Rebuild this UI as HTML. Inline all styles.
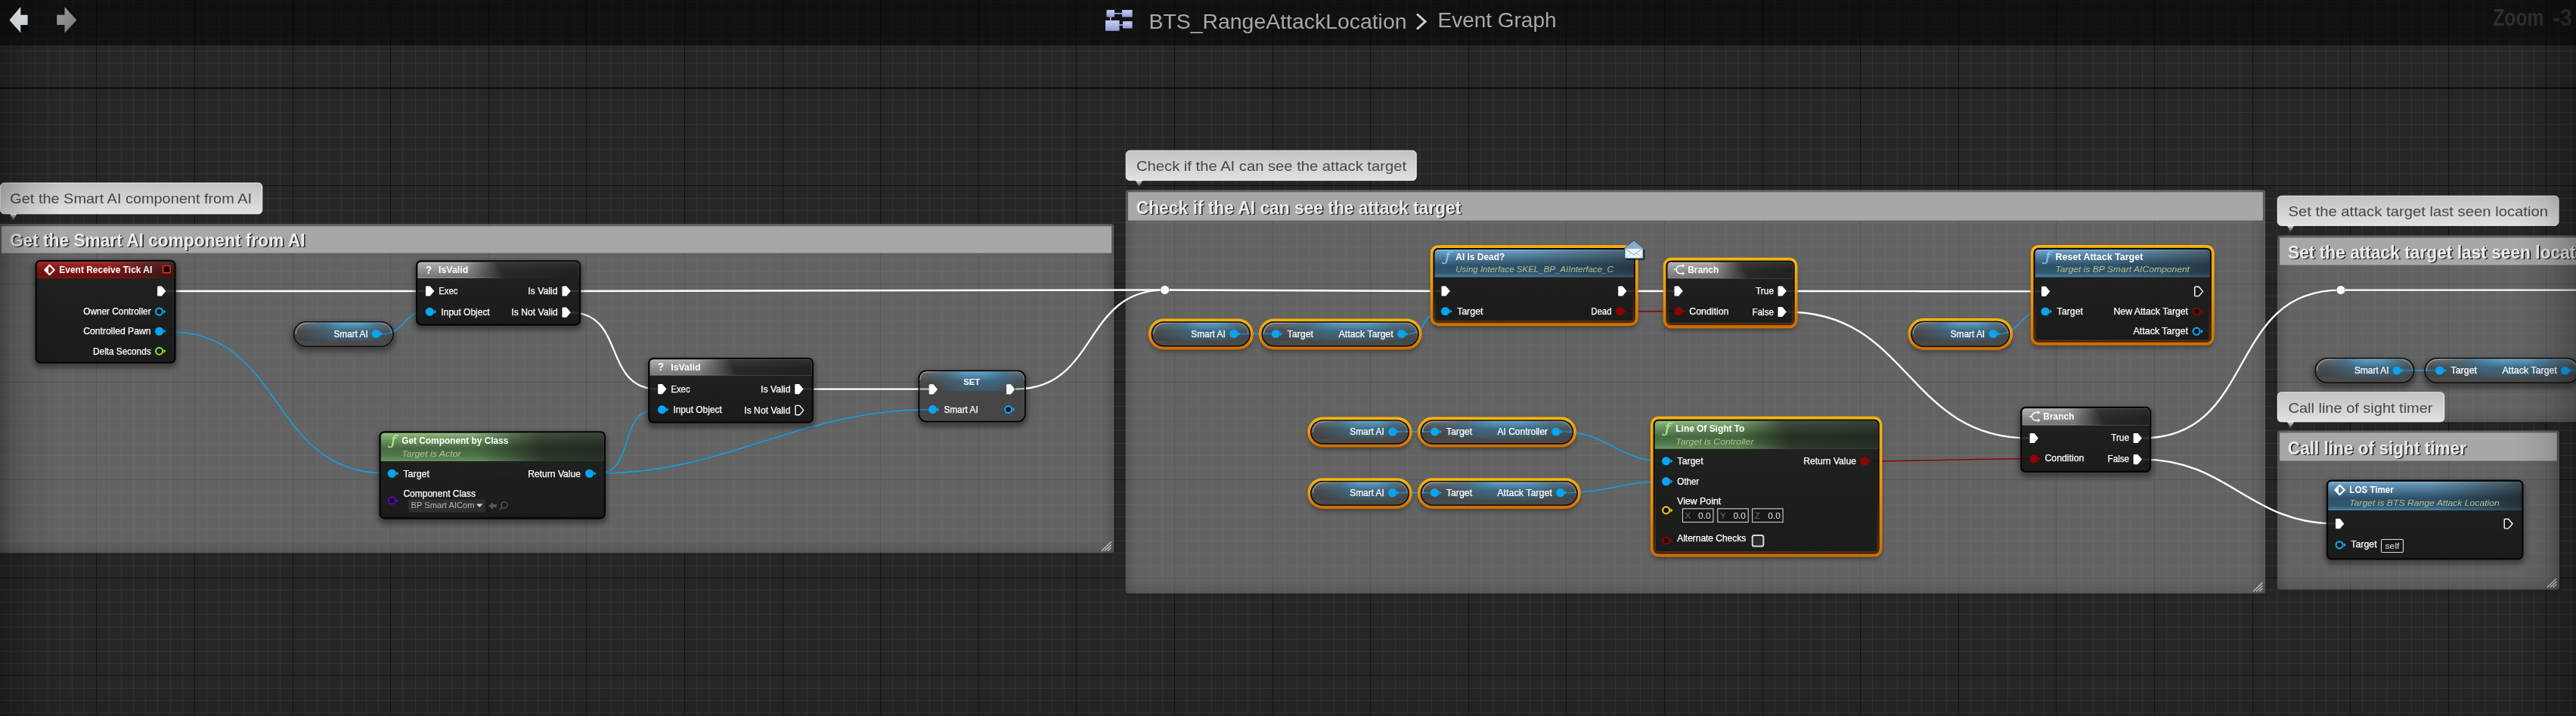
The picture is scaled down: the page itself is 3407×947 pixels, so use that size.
<!DOCTYPE html>
<html><head><meta charset="utf-8"><title>BTS_RangeAttackLocation - Event Graph</title>
<style>
html,body{margin:0;padding:0;background:#262626;overflow:hidden}
svg{display:block;font-family:"Liberation Sans",sans-serif;will-change:transform}
text{white-space:pre}
</style></head><body>
<svg width="3407" height="947" viewBox="0 0 3407 947">
<defs>
<filter id="blur2" x="-5%" y="-5%" width="110%" height="115%"><feGaussianBlur stdDeviation="2.5"/></filter>
<linearGradient id="gbubarrow" x1="0" y1="0" x2="0" y2="1"><stop offset="0" stop-color="#f4f4f4"/><stop offset="1" stop-color="#bbbbbb" stop-opacity="0.25"/></linearGradient>
<filter id="blur4" x="-20%" y="-20%" width="140%" height="160%"><feGaussianBlur stdDeviation="3"/></filter>
<linearGradient id="gbody" x1="0" y1="0" x2="0" y2="1"><stop offset="0" stop-color="#191b19" stop-opacity="0.80"/><stop offset="1" stop-color="#101210" stop-opacity="0.80"/></linearGradient>
<linearGradient id="gsel" x1="0" y1="0" x2="0" y2="1" gradientUnits="objectBoundingBox"><stop offset="0" stop-color="#f8b30a"/><stop offset="0.45" stop-color="#ee9a06"/><stop offset="1" stop-color="#d06e00"/></linearGradient>
<linearGradient id="gselglow" x1="0" y1="0" x2="0" y2="1"><stop offset="0" stop-color="#c07808" stop-opacity="0.0"/><stop offset="0.6" stop-color="#b06a06" stop-opacity="0.10"/><stop offset="1" stop-color="#a05a04" stop-opacity="0.42"/></linearGradient>
<linearGradient id="hred" x1="0" y1="0" x2="0" y2="1"><stop offset="0" stop-color="#b22a2a"/><stop offset="0.12" stop-color="#981b1b"/><stop offset="0.9" stop-color="#6e0f0f"/><stop offset="1" stop-color="#8a1a1a"/></linearGradient>
<linearGradient id="hgreen" x1="0" y1="0" x2="0" y2="1"><stop offset="0" stop-color="#8ec07e"/><stop offset="0.12" stop-color="#76a568"/><stop offset="0.55" stop-color="#486a41"/><stop offset="0.78" stop-color="#50774a"/><stop offset="1" stop-color="#68965f"/></linearGradient>
<linearGradient id="hblue" x1="0" y1="0" x2="0" y2="1"><stop offset="0" stop-color="#7cb0d4"/><stop offset="0.12" stop-color="#5b90b5"/><stop offset="0.58" stop-color="#2f526c"/><stop offset="0.85" stop-color="#315872"/><stop offset="1" stop-color="#4d84a8"/></linearGradient>
<linearGradient id="hgrey" x1="0" y1="0" x2="0" y2="1"><stop offset="0" stop-color="#c4c4c4"/><stop offset="0.12" stop-color="#a8a8a8"/><stop offset="0.92" stop-color="#787878"/><stop offset="1" stop-color="#9a9a9a"/></linearGradient>
<linearGradient id="ggloss" x1="0" y1="0" x2="0" y2="1"><stop offset="0" stop-color="#fff" stop-opacity="0.06"/><stop offset="0.5" stop-color="#fff" stop-opacity="0"/></linearGradient>
<linearGradient id="gvar" x1="0" y1="0" x2="0" y2="1"><stop offset="0" stop-color="#70777b"/><stop offset="0.35" stop-color="#4c5154"/><stop offset="0.78" stop-color="#414446"/><stop offset="0.8" stop-color="#4c4c4c"/><stop offset="1" stop-color="#4a4a4a"/></linearGradient>
<linearGradient id="gvarblue" x1="0" y1="0" x2="1" y2="0"><stop offset="0.1" stop-color="#3a7aa0" stop-opacity="0"/><stop offset="0.42" stop-color="#3a7aa0" stop-opacity="0.95"/><stop offset="0.72" stop-color="#3a7aa0" stop-opacity="0.95"/><stop offset="0.99" stop-color="#3a7aa0" stop-opacity="0.08"/></linearGradient>
<linearGradient id="gvarmaskg" x1="0" y1="0" x2="0" y2="1"><stop offset="0" stop-color="#fff"/><stop offset="0.45" stop-color="#999"/><stop offset="0.77" stop-color="#555"/><stop offset="0.8" stop-color="#000"/></linearGradient>
<linearGradient id="gvartopmg" x1="0" y1="0" x2="1" y2="0"><stop offset="0" stop-color="#000"/><stop offset="0.35" stop-color="#fff"/><stop offset="0.65" stop-color="#fff"/><stop offset="1" stop-color="#000"/></linearGradient>
<mask id="gvartopmask" maskContentUnits="objectBoundingBox"><rect width="1" height="1" fill="url(#gvartopmg)"/></mask>
<linearGradient id="gsetmg" x1="0" y1="0" x2="0" y2="1"><stop offset="0" stop-color="#fff"/><stop offset="0.2" stop-color="#aaa"/><stop offset="0.39" stop-color="#666"/><stop offset="0.41" stop-color="#000"/></linearGradient>
<linearGradient id="gsetbase" x1="0" y1="0" x2="0" y2="1"><stop offset="0" stop-color="#9aa4aa" stop-opacity="0.45"/><stop offset="0.2" stop-color="#707a80" stop-opacity="0.12"/><stop offset="0.4" stop-color="#000" stop-opacity="0.05"/><stop offset="0.41" stop-color="#000" stop-opacity="0"/></linearGradient>
<mask id="gsetmask" maskContentUnits="objectBoundingBox"><rect width="1" height="1" fill="url(#gsetmg)"/></mask>
<mask id="gvarmask" maskContentUnits="objectBoundingBox"><rect width="1" height="1" fill="url(#gvarmaskg)"/></mask>
<linearGradient id="gvartop" x1="0" y1="0" x2="0" y2="1"><stop offset="0" stop-color="#8fd0f5" stop-opacity="0.45"/><stop offset="0.36" stop-color="#8fd0f5" stop-opacity="0"/></linearGradient>
<linearGradient id="gvarhl" x1="0" y1="0" x2="1" y2="0"><stop offset="0" stop-color="#fff" stop-opacity="0.55"/><stop offset="0.25" stop-color="#fff" stop-opacity="0.15"/><stop offset="0.85" stop-color="#fff" stop-opacity="0.15"/><stop offset="1" stop-color="#fff" stop-opacity="0.3"/></linearGradient>
<linearGradient id="gbub" x1="0" y1="0" x2="0" y2="1"><stop offset="0" stop-color="#c2c2c2"/><stop offset="1" stop-color="#e1e1e1"/></linearGradient>
<linearGradient id="gbar" x1="0" y1="0" x2="0" y2="1"><stop offset="0" stop-color="#000" stop-opacity="0.60"/><stop offset="1" stop-color="#000" stop-opacity="0.56"/></linearGradient>
<linearGradient id="cedgeL" x1="0" y1="0" x2="1" y2="0"><stop offset="0" stop-color="#000" stop-opacity="0.13"/><stop offset="0.6" stop-color="#000" stop-opacity="0.05"/><stop offset="1" stop-color="#000" stop-opacity="0"/></linearGradient>
<linearGradient id="cedgeR" x1="1" y1="0" x2="0" y2="0"><stop offset="0" stop-color="#000" stop-opacity="0.13"/><stop offset="0.6" stop-color="#000" stop-opacity="0.05"/><stop offset="1" stop-color="#000" stop-opacity="0"/></linearGradient>
<linearGradient id="cedgeB" x1="0" y1="1" x2="0" y2="0"><stop offset="0" stop-color="#000" stop-opacity="0.13"/><stop offset="0.6" stop-color="#000" stop-opacity="0.05"/><stop offset="1" stop-color="#000" stop-opacity="0"/></linearGradient>
<linearGradient id="vigL" x1="0" y1="0" x2="1" y2="0"><stop offset="0" stop-color="#000" stop-opacity="0.24"/><stop offset="0.5" stop-color="#000" stop-opacity="0.08"/><stop offset="1" stop-color="#000" stop-opacity="0"/></linearGradient>
<linearGradient id="vigR" x1="1" y1="0" x2="0" y2="0"><stop offset="0" stop-color="#000" stop-opacity="0.24"/><stop offset="0.5" stop-color="#000" stop-opacity="0.08"/><stop offset="1" stop-color="#000" stop-opacity="0"/></linearGradient>
<linearGradient id="vigB" x1="0" y1="1" x2="0" y2="0"><stop offset="0" stop-color="#000" stop-opacity="0.12"/><stop offset="1" stop-color="#000" stop-opacity="0"/></linearGradient>
</defs>
<rect width="3407" height="947" fill="#262626"/>

<path d="M14.5,0V947M30.5,0V947M46.5,0V947M63.5,0V947M79.5,0V947M95.5,0V947M111.5,0V947M144.5,0V947M160.5,0V947M176.5,0V947M192.5,0V947M208.5,0V947M225.5,0V947M241.5,0V947M273.5,0V947M289.5,0V947M306.5,0V947M322.5,0V947M338.5,0V947M354.5,0V947M370.5,0V947M403.5,0V947M419.5,0V947M435.5,0V947M451.5,0V947M468.5,0V947M484.5,0V947M500.5,0V947M532.5,0V947M549.5,0V947M565.5,0V947M581.5,0V947M597.5,0V947M613.5,0V947M630.5,0V947M662.5,0V947M678.5,0V947M694.5,0V947M711.5,0V947M727.5,0V947M743.5,0V947M759.5,0V947M792.5,0V947M808.5,0V947M824.5,0V947M840.5,0V947M856.5,0V947M873.5,0V947M889.5,0V947M921.5,0V947M937.5,0V947M954.5,0V947M970.5,0V947M986.5,0V947M1002.5,0V947M1018.5,0V947M1051.5,0V947M1067.5,0V947M1083.5,0V947M1099.5,0V947M1116.5,0V947M1132.5,0V947M1148.5,0V947M1180.5,0V947M1197.5,0V947M1213.5,0V947M1229.5,0V947M1245.5,0V947M1261.5,0V947M1278.5,0V947M1310.5,0V947M1326.5,0V947M1342.5,0V947M1359.5,0V947M1375.5,0V947M1391.5,0V947M1407.5,0V947M1440.5,0V947M1456.5,0V947M1472.5,0V947M1488.5,0V947M1504.5,0V947M1521.5,0V947M1537.5,0V947M1569.5,0V947M1585.5,0V947M1602.5,0V947M1618.5,0V947M1634.5,0V947M1650.5,0V947M1666.5,0V947M1699.5,0V947M1715.5,0V947M1731.5,0V947M1747.5,0V947M1764.5,0V947M1780.5,0V947M1796.5,0V947M1828.5,0V947M1845.5,0V947M1861.5,0V947M1877.5,0V947M1893.5,0V947M1909.5,0V947M1926.5,0V947M1958.5,0V947M1974.5,0V947M1990.5,0V947M2007.5,0V947M2023.5,0V947M2039.5,0V947M2055.5,0V947M2088.5,0V947M2104.5,0V947M2120.5,0V947M2136.5,0V947M2152.5,0V947M2169.5,0V947M2185.5,0V947M2217.5,0V947M2233.5,0V947M2250.5,0V947M2266.5,0V947M2282.5,0V947M2298.5,0V947M2314.5,0V947M2347.5,0V947M2363.5,0V947M2379.5,0V947M2395.5,0V947M2412.5,0V947M2428.5,0V947M2444.5,0V947M2476.5,0V947M2493.5,0V947M2509.5,0V947M2525.5,0V947M2541.5,0V947M2557.5,0V947M2574.5,0V947M2606.5,0V947M2622.5,0V947M2638.5,0V947M2655.5,0V947M2671.5,0V947M2687.5,0V947M2703.5,0V947M2736.5,0V947M2752.5,0V947M2768.5,0V947M2784.5,0V947M2800.5,0V947M2817.5,0V947M2833.5,0V947M2865.5,0V947M2881.5,0V947M2898.5,0V947M2914.5,0V947M2930.5,0V947M2946.5,0V947M2962.5,0V947M2995.5,0V947M3011.5,0V947M3027.5,0V947M3043.5,0V947M3060.5,0V947M3076.5,0V947M3092.5,0V947M3124.5,0V947M3141.5,0V947M3157.5,0V947M3173.5,0V947M3189.5,0V947M3205.5,0V947M3222.5,0V947M3254.5,0V947M3270.5,0V947M3286.5,0V947M3303.5,0V947M3319.5,0V947M3335.5,0V947M3351.5,0V947M3384.5,0V947M3400.5,0V947M0,2.5H3407M0,19.5H3407M0,35.5H3407M0,51.5H3407M0,67.5H3407M0,83.5H3407M0,100.5H3407M0,132.5H3407M0,148.5H3407M0,164.5H3407M0,181.5H3407M0,197.5H3407M0,213.5H3407M0,229.5H3407M0,262.5H3407M0,278.5H3407M0,294.5H3407M0,310.5H3407M0,326.5H3407M0,343.5H3407M0,359.5H3407M0,391.5H3407M0,407.5H3407M0,424.5H3407M0,440.5H3407M0,456.5H3407M0,472.5H3407M0,488.5H3407M0,521.5H3407M0,537.5H3407M0,553.5H3407M0,569.5H3407M0,586.5H3407M0,602.5H3407M0,618.5H3407M0,650.5H3407M0,667.5H3407M0,683.5H3407M0,699.5H3407M0,715.5H3407M0,731.5H3407M0,748.5H3407M0,780.5H3407M0,796.5H3407M0,812.5H3407M0,829.5H3407M0,845.5H3407M0,861.5H3407M0,877.5H3407M0,910.5H3407M0,926.5H3407M0,942.5H3407" stroke="#323232" stroke-width="1" fill="none"/>
<path d="M-1.5,0V947M127.5,0V947M257.5,0V947M387.5,0V947M516.5,0V947M646.5,0V947M775.5,0V947M905.5,0V947M1035.5,0V947M1164.5,0V947M1294.5,0V947M1423.5,0V947M1553.5,0V947M1683.5,0V947M1812.5,0V947M1942.5,0V947M2071.5,0V947M2201.5,0V947M2331.5,0V947M2460.5,0V947M2590.5,0V947M2719.5,0V947M2849.5,0V947M2979.5,0V947M3108.5,0V947M3238.5,0V947M3367.5,0V947M0,-13.5H3407M0,245.5H3407M0,375.5H3407M0,505.5H3407M0,634.5H3407M0,764.5H3407M0,893.5H3407" stroke="#131313" stroke-width="1" fill="none"/>
<path d="M0,116.5H3407" stroke="#000" stroke-width="1.4" fill="none"/>
<rect x="-2.3" y="295.2" width="1476.6" height="438.1" rx="4" fill="#000" opacity="0.18" filter="url(#blur2)"/>
<rect x="-1.3" y="296.2" width="1474.6" height="435.1" rx="3" fill="#fff" opacity="0.305"/>
<rect x="-1.3" y="296.2" width="17" height="435.1" fill="url(#cedgeL)"/>
<rect x="1456.3" y="296.2" width="17" height="435.1" fill="url(#cedgeR)"/>
<rect x="-1.3" y="714.3" width="1474.6" height="17" fill="url(#cedgeB)"/>
<rect x="1.9" y="299.2" width="1468.2" height="35.5" fill="#a7a7a7"/>
<text x="14.5" y="327.4" font-size="23.7" fill="#151515" font-weight="bold" textLength="390.6" lengthAdjust="spacingAndGlyphs" opacity="0.9">Get the Smart AI component from AI</text>
<text x="12.9" y="325.8" font-size="23.7" fill="#ececec" font-weight="bold" textLength="390.6" lengthAdjust="spacingAndGlyphs">Get the Smart AI component from AI</text>
<path d="M1457.2,728.5 L1469.7,716.7 M1461.2,728.5 L1469.7,720.5 M1465.2,728.5 L1469.7,724.3" stroke="#d8d8d8" stroke-width="1.1" fill="none"/>
<rect x="1487.8" y="250.2" width="1509.3" height="536.9" rx="4" fill="#000" opacity="0.18" filter="url(#blur2)"/>
<rect x="1488.8" y="251.2" width="1507.3" height="533.9" rx="3" fill="#fff" opacity="0.305"/>
<rect x="1488.8" y="251.2" width="17" height="533.9" fill="url(#cedgeL)"/>
<rect x="2979.1" y="251.2" width="17" height="533.9" fill="url(#cedgeR)"/>
<rect x="1488.8" y="768.1" width="1507.3" height="17" fill="url(#cedgeB)"/>
<rect x="1492.0" y="254.2" width="1500.9" height="37.4" fill="#a7a7a7"/>
<text x="1504.3" y="284.3" font-size="23.7" fill="#151515" font-weight="bold" textLength="429.6" lengthAdjust="spacingAndGlyphs" opacity="0.9">Check if the AI can see the attack target</text>
<text x="1502.7" y="282.7" font-size="23.7" fill="#ececec" font-weight="bold" textLength="429.6" lengthAdjust="spacingAndGlyphs">Check if the AI can see the attack target</text>
<path d="M2980.0,782.3 L2992.5,770.5 M2984.0,782.3 L2992.5,774.3 M2988.0,782.3 L2992.5,778.1" stroke="#d8d8d8" stroke-width="1.1" fill="none"/>
<rect x="3011.0" y="310.4" width="410.0" height="249.9" rx="4" fill="#000" opacity="0.18" filter="url(#blur2)"/>
<rect x="3012.0" y="311.4" width="408.0" height="246.9" rx="3" fill="#fff" opacity="0.305"/>
<rect x="3012.0" y="311.4" width="17" height="246.9" fill="url(#cedgeL)"/>
<rect x="3403.0" y="311.4" width="17" height="246.9" fill="url(#cedgeR)"/>
<rect x="3012.0" y="541.3" width="408.0" height="17" fill="url(#cedgeB)"/>
<rect x="3015.2" y="314.4" width="401.6" height="36.1" fill="#a7a7a7"/>
<text x="3027.6" y="343.2" font-size="23.7" fill="#151515" font-weight="bold" textLength="414.5" lengthAdjust="spacingAndGlyphs" opacity="0.9">Set the attack target last seen location</text>
<text x="3026.0" y="341.6" font-size="23.7" fill="#ececec" font-weight="bold" textLength="414.5" lengthAdjust="spacingAndGlyphs">Set the attack target last seen location</text>
<rect x="3011.0" y="568.4" width="374.9" height="213.4" rx="4" fill="#000" opacity="0.18" filter="url(#blur2)"/>
<rect x="3012.0" y="569.4" width="372.9" height="210.4" rx="3" fill="#fff" opacity="0.305"/>
<rect x="3012.0" y="569.4" width="17" height="210.4" fill="url(#cedgeL)"/>
<rect x="3367.9" y="569.4" width="17" height="210.4" fill="url(#cedgeR)"/>
<rect x="3012.0" y="762.8" width="372.9" height="17" fill="url(#cedgeB)"/>
<rect x="3015.2" y="572.4" width="366.5" height="37.1" fill="#a7a7a7"/>
<text x="3027.4" y="602.2" font-size="23.7" fill="#151515" font-weight="bold" textLength="236.2" lengthAdjust="spacingAndGlyphs" opacity="0.9">Call line of sight timer</text>
<text x="3025.8" y="600.6" font-size="23.7" fill="#ececec" font-weight="bold" textLength="236.2" lengthAdjust="spacingAndGlyphs">Call line of sight timer</text>
<path d="M3368.8,777.0 L3381.3,765.2 M3372.8,777.0 L3381.3,769.0 M3376.8,777.0 L3381.3,772.8" stroke="#d8d8d8" stroke-width="1.1" fill="none"/>
<path d="M12.7,282.3 h10 l-5,9 z" fill="url(#gbubarrow)"/>
<rect x="0.5" y="242.0" width="346.3" height="40.8" rx="5" fill="url(#gbub)" stroke="#f6f6f6" stroke-width="1"/>
<text x="13.3" y="268.9" font-size="19.0" fill="#464646" textLength="319.7" lengthAdjust="spacingAndGlyphs">Get the Smart AI component from AI</text>
<path d="M1501.5,238.1 h10 l-5,9 z" fill="url(#gbubarrow)"/>
<rect x="1489.3" y="199.2" width="383.9" height="39.4" rx="5" fill="url(#gbub)" stroke="#f6f6f6" stroke-width="1"/>
<text x="1503.0" y="226.1" font-size="19.0" fill="#464646" textLength="357.0" lengthAdjust="spacingAndGlyphs">Check if the AI can see the attack target</text>
<path d="M3024.5,297.8 h10 l-5,9 z" fill="url(#gbubarrow)"/>
<rect x="3012.3" y="259.2" width="371.7" height="39.1" rx="5" fill="url(#gbub)" stroke="#f6f6f6" stroke-width="1"/>
<text x="3026.5" y="286.1" font-size="19.0" fill="#464646" textLength="343.5" lengthAdjust="spacingAndGlyphs">Set the attack target last seen location</text>
<path d="M3024.5,557.3 h10 l-5,9 z" fill="url(#gbubarrow)"/>
<rect x="3012.3" y="518.9" width="220.4" height="38.9" rx="5" fill="url(#gbub)" stroke="#f6f6f6" stroke-width="1"/>
<text x="3026.5" y="545.8" font-size="19.0" fill="#464646" textLength="191.0" lengthAdjust="spacingAndGlyphs">Call line of sight timer</text>
<rect x="385.1" y="426.0" width="138.8" height="39.8" rx="19.900000000000006" fill="#000" opacity="0.35" filter="url(#blur4)"/>
<rect x="389.4" y="426.2" width="130.3" height="31.3" rx="15.7" fill="url(#gvar)" opacity="0.85"/>
<rect x="389.4" y="426.2" width="130.3" height="31.3" rx="15.7" fill="url(#gvarblue)" mask="url(#gvarmask)"/>
<rect x="427.9" y="426.2" width="73.0" height="31.3" fill="url(#gvartop)" mask="url(#gvartopmask)"/>
<rect x="1211.5" y="490.4" width="148.4" height="75.2" rx="14" fill="#000" opacity="0.35" filter="url(#blur4)"/>
<rect x="1216.3" y="491.2" width="138.8" height="65.6" rx="9.2" fill="#474747" opacity="0.8"/>
<rect x="1216.3" y="491.2" width="138.8" height="65.6" rx="9.2" fill="url(#gsetbase)"/>
<rect x="1216.3" y="491.2" width="138.8" height="65.6" rx="9.2" fill="url(#gvarblue)" mask="url(#gsetmask)"/>
<rect x="1250.1" y="491.2" width="78.3" height="34.6" fill="url(#gvartop)" mask="url(#gvartopmask)"/>
<rect x="1519.7" y="426.3" width="137.2" height="39.0" rx="19.5" fill="#000" opacity="0.35" filter="url(#blur4)"/>
<rect x="1524.0" y="426.6" width="128.7" height="30.5" rx="15.2" fill="url(#gvar)" opacity="0.85"/>
<rect x="1524.0" y="426.6" width="128.7" height="30.5" rx="15.2" fill="url(#gvarblue)" mask="url(#gvarmask)"/>
<rect x="1562.1" y="426.6" width="72.2" height="30.5" fill="url(#gvartop)" mask="url(#gvartopmask)"/>
<rect x="1665.5" y="426.3" width="214.2" height="39.0" rx="19.5" fill="#000" opacity="0.35" filter="url(#blur4)"/>
<rect x="1669.8" y="426.6" width="205.7" height="30.5" rx="15.2" fill="url(#gvar)" opacity="0.85"/>
<rect x="1669.8" y="426.6" width="205.7" height="30.5" rx="15.2" fill="url(#gvarblue)" mask="url(#gvarmask)"/>
<rect x="1731.0" y="426.6" width="114.5" height="30.5" fill="url(#gvartop)" mask="url(#gvartopmask)"/>
<rect x="1730.2" y="556.4" width="136.7" height="38.1" rx="19.05000000000001" fill="#000" opacity="0.35" filter="url(#blur4)"/>
<rect x="1734.5" y="556.6" width="128.2" height="29.6" rx="14.8" fill="url(#gvar)" opacity="0.85"/>
<rect x="1734.5" y="556.6" width="128.2" height="29.6" rx="14.8" fill="url(#gvarblue)" mask="url(#gvarmask)"/>
<rect x="1772.4" y="556.6" width="71.9" height="29.6" fill="url(#gvartop)" mask="url(#gvartopmask)"/>
<rect x="1875.7" y="556.4" width="208.4" height="38.1" rx="19.05000000000001" fill="#000" opacity="0.35" filter="url(#blur4)"/>
<rect x="1880.0" y="556.6" width="199.9" height="29.6" rx="14.8" fill="url(#gvar)" opacity="0.85"/>
<rect x="1880.0" y="556.6" width="199.9" height="29.6" rx="14.8" fill="url(#gvarblue)" mask="url(#gvarmask)"/>
<rect x="1939.4" y="556.6" width="111.3" height="29.6" fill="url(#gvartop)" mask="url(#gvartopmask)"/>
<rect x="1730.2" y="637.0" width="136.7" height="38.8" rx="19.399999999999977" fill="#000" opacity="0.35" filter="url(#blur4)"/>
<rect x="1734.5" y="637.2" width="128.2" height="30.3" rx="15.1" fill="url(#gvar)" opacity="0.85"/>
<rect x="1734.5" y="637.2" width="128.2" height="30.3" rx="15.1" fill="url(#gvarblue)" mask="url(#gvarmask)"/>
<rect x="1772.4" y="637.2" width="71.9" height="30.3" fill="url(#gvartop)" mask="url(#gvartopmask)"/>
<rect x="1875.7" y="637.0" width="214.1" height="38.8" rx="19.399999999999977" fill="#000" opacity="0.35" filter="url(#blur4)"/>
<rect x="1880.0" y="637.2" width="205.6" height="30.3" rx="15.1" fill="url(#gvar)" opacity="0.85"/>
<rect x="1880.0" y="637.2" width="205.6" height="30.3" rx="15.1" fill="url(#gvarblue)" mask="url(#gvarmask)"/>
<rect x="1941.1" y="637.2" width="114.5" height="30.3" fill="url(#gvartop)" mask="url(#gvartopmask)"/>
<rect x="2524.3" y="425.7" width="137.0" height="40.1" rx="20.05000000000001" fill="#000" opacity="0.35" filter="url(#blur4)"/>
<rect x="2528.6" y="425.9" width="128.5" height="31.6" rx="15.8" fill="url(#gvar)" opacity="0.85"/>
<rect x="2528.6" y="425.9" width="128.5" height="31.6" rx="15.8" fill="url(#gvarblue)" mask="url(#gvarmask)"/>
<rect x="2566.6" y="425.9" width="72.1" height="31.6" fill="url(#gvartop)" mask="url(#gvartopmask)"/>
<rect x="3058.4" y="474.3" width="137.9" height="39.6" rx="19.799999999999983" fill="#000" opacity="0.35" filter="url(#blur4)"/>
<rect x="3062.7" y="474.6" width="129.4" height="31.1" rx="15.5" fill="url(#gvar)" opacity="0.85"/>
<rect x="3062.7" y="474.6" width="129.4" height="31.1" rx="15.5" fill="url(#gvarblue)" mask="url(#gvarmask)"/>
<rect x="3101.0" y="474.6" width="72.5" height="31.1" fill="url(#gvartop)" mask="url(#gvartopmask)"/>
<rect x="3203.3" y="474.3" width="211.7" height="39.6" rx="19.799999999999983" fill="#000" opacity="0.35" filter="url(#blur4)"/>
<rect x="3207.6" y="474.6" width="203.2" height="31.1" rx="15.5" fill="url(#gvar)" opacity="0.85"/>
<rect x="3207.6" y="474.6" width="203.2" height="31.1" rx="15.5" fill="url(#gvarblue)" mask="url(#gvarmask)"/>
<rect x="3268.0" y="474.6" width="113.1" height="31.1" fill="url(#gvartop)" mask="url(#gvartopmask)"/>
<mask id="wiremask" maskUnits="userSpaceOnUse" x="0" y="0" width="3407" height="947"><rect width="3407" height="947" fill="#fff"/><rect x="389.1" y="426.0" width="130.8" height="31.8" rx="15.9" fill="#a4a4a4"/><rect x="1215.5" y="490.4" width="140.4" height="67.2" rx="10.0" fill="#a4a4a4"/><rect x="1523.7" y="426.3" width="129.2" height="31.0" rx="15.5" fill="#a4a4a4"/><rect x="1669.5" y="426.3" width="206.2" height="31.0" rx="15.5" fill="#a4a4a4"/><rect x="1734.2" y="556.4" width="128.7" height="30.1" rx="15.1" fill="#a4a4a4"/><rect x="1879.7" y="556.4" width="200.4" height="30.1" rx="15.1" fill="#a4a4a4"/><rect x="1734.2" y="637.0" width="128.7" height="30.8" rx="15.4" fill="#a4a4a4"/><rect x="1879.7" y="637.0" width="206.1" height="30.8" rx="15.4" fill="#a4a4a4"/><rect x="2528.3" y="425.7" width="129.0" height="32.1" rx="16.1" fill="#a4a4a4"/><rect x="3062.4" y="474.3" width="129.9" height="31.6" rx="15.8" fill="#a4a4a4"/><rect x="3207.3" y="474.3" width="203.7" height="31.6" rx="15.8" fill="#a4a4a4"/></mask>
<g mask="url(#wiremask)">
<path d="M219.9,385.0 C334.0,385.0 448.2,385.0 562.3,385.0" fill="none" stroke="#fff" stroke-width="2.35"/>
<path d="M755.0,385.0 C1017.4,385.0 1278.2,383.5 1540.6,383.5" fill="none" stroke="#fff" stroke-width="2.35"/>
<path d="M1540.6,383.5 C1663.1,383.5 1784.0,385.0 1906.5,385.0" fill="none" stroke="#fff" stroke-width="2.35"/>
<path d="M755.0,413.2 C827.0,413.2 797.5,514.6 869.5,514.6" fill="none" stroke="#fff" stroke-width="2.35"/>
<path d="M1062.8,514.6 C1118.2,514.6 1173.6,514.6 1229.0,514.6" fill="none" stroke="#fff" stroke-width="2.35"/>
<path d="M1343.3,514.6 C1452.8,514.6 1431.1,383.5 1540.6,383.5" fill="none" stroke="#fff" stroke-width="2.35"/>
<path d="M219.8,438.2 C380.1,438.2 352.4,626.3 512.7,626.3" fill="none" stroke="#0aa4ef" stroke-width="1.5"/>
<path d="M506.6,441.5 C534.7,441.5 533.8,412.4 561.9,412.4" fill="none" stroke="#0aa4ef" stroke-width="1.5"/>
<path d="M788.8,626.3 C843.7,626.3 814.2,541.8 869.1,541.8" fill="none" stroke="#0aa4ef" stroke-width="1.5"/>
<path d="M788.8,626.3 C963.7,626.3 1054.1,541.8 1229.0,541.8" fill="none" stroke="#0aa4ef" stroke-width="1.5"/>
<path d="M1641.0,441.6 C1654.6,441.6 1668.2,441.6 1681.8,441.6" fill="none" stroke="#0aa4ef" stroke-width="1.5"/>
<path d="M1862.8,441.6 C1887.2,441.6 1881.6,411.7 1906.0,411.7" fill="none" stroke="#0aa4ef" stroke-width="1.5"/>
<path d="M2152.0,385.0 C2172.8,385.0 2193.7,385.0 2214.5,385.0" fill="none" stroke="#fff" stroke-width="2.35"/>
<path d="M2151.8,411.7 C2172.6,411.7 2193.5,411.7 2214.3,411.7" fill="none" stroke="#8f0303" stroke-width="1.5"/>
<path d="M2363.3,385.0 C2475.7,385.0 2587.6,385.4 2700.0,385.4" fill="none" stroke="#fff" stroke-width="2.35"/>
<path d="M2363.3,412.5 C2526.0,412.5 2521.7,579.5 2684.4,579.5" fill="none" stroke="#fff" stroke-width="2.35"/>
<path d="M2643.8,441.5 C2672.2,441.5 2671.1,412.0 2699.5,412.0" fill="none" stroke="#0aa4ef" stroke-width="1.5"/>
<path d="M1849.5,571.0 C1864.9,571.0 1880.3,571.0 1895.7,571.0" fill="none" stroke="#0aa4ef" stroke-width="1.5"/>
<path d="M1849.5,651.7 C1864.9,651.7 1880.3,651.7 1895.7,651.7" fill="none" stroke="#0aa4ef" stroke-width="1.5"/>
<path d="M2067.6,571.0 C2124.0,571.0 2141.6,609.8 2198.0,609.8" fill="none" stroke="#0aa4ef" stroke-width="1.5"/>
<path d="M2073.3,651.7 C2119.9,651.7 2151.4,636.7 2198.0,636.7" fill="none" stroke="#0aa4ef" stroke-width="1.5"/>
<path d="M2475.1,609.8 C2545.9,609.8 2613.6,606.8 2684.4,606.8" fill="none" stroke="#8f0303" stroke-width="1.5"/>
<path d="M2833.4,579.5 C2986.2,579.5 2943.1,383.6 3095.9,383.6" fill="none" stroke="#fff" stroke-width="2.35"/>
<path d="M3095.9,383.6 C3207.3,383.6 3318.6,383.7 3430.0,383.7" fill="none" stroke="#fff" stroke-width="2.35"/>
<path d="M2833.4,607.6 C2947.0,607.6 2975.4,692.7 3089.0,692.7" fill="none" stroke="#fff" stroke-width="2.35"/>
<path d="M3179.3,490.0 C3193.2,490.0 3207.1,490.0 3221.0,490.0" fill="none" stroke="#0aa4ef" stroke-width="1.5"/>
<path d="M3401.8,490.0 C3411.2,490.0 3420.6,490.0 3430.0,490.0" fill="none" stroke="#0aa4ef" stroke-width="1.5"/>
</g>
<circle cx="1540.6" cy="383.5" r="5.9" fill="#fff" stroke="#555" stroke-width="0.6"/><path d="M1546.8,381.3 l2.6,2.2 l-2.6,2.2 z" fill="#fff"/>
<circle cx="3095.9" cy="383.6" r="5.9" fill="#fff" stroke="#555" stroke-width="0.6"/><path d="M3102.1,381.40000000000003 l2.6,2.2 l-2.6,2.2 z" fill="#fff"/>
<rect x="43.9" y="345.2" width="191.3" height="142.1" rx="9.5" fill="#000" opacity="0.35" filter="url(#blur4)"/>
<rect x="47.6" y="344.9" width="183.9" height="134.7" rx="5.8" fill="url(#gbody)" stroke="#060606" stroke-width="2.3"/>
<path d="M48.9,368.0 V351.2 Q48.9,346.2 53.9,346.2 H225.2 Q230.2,346.2 230.2,351.2 V368.0 Z" fill="url(#hred)"/>
<linearGradient id="fd1" x1="0" y1="0.532" x2="1" y2="0.468"><stop offset="0" stop-color="#1b1d1b" stop-opacity="0"/><stop offset="0.55" stop-color="#1b1d1b" stop-opacity="0.06"/><stop offset="1.00" stop-color="#1b1d1b" stop-opacity="0.75"/><stop offset="1" stop-color="#1b1d1b" stop-opacity="0.83"/></linearGradient>
<path d="M48.9,368.0 V351.2 Q48.9,346.2 53.9,346.2 H225.2 Q230.2,346.2 230.2,351.2 V368.0 Z" fill="url(#fd1)"/>
<path d="M48.9,368.0 V351.2 Q48.9,346.2 53.9,346.2 H225.2 Q230.2,346.2 230.2,351.2 V368.0 Z" fill="url(#ggloss)"/>
<path d="M59.3,357.0 L65.5,350.8 L71.7,357.0 L65.5,363.2 Z" fill="none" stroke="#fff" stroke-width="2.2" stroke-linejoin="round"/>
<path d="M59.5,357.0 l4.6,-3 v6 z" fill="#fff"/>
<text x="78.3" y="361.2" font-size="12.7" fill="#fff" font-weight="bold" textLength="123.0" lengthAdjust="spacingAndGlyphs">Event Receive Tick AI</text>
<rect x="215.6" y="351.5" width="9.6" height="9.4" rx="1.5" fill="#1a0202" stroke="#f02424" stroke-width="1.7"/>
<path d="M209.3,378.4 h4.6 l5.5,6.6 l-5.5,6.6 h-4.6 q-1.2,0 -1.2,-1.2 v-10.8 q0,-1.2 1.2,-1.2 z" fill="#fff"/>
<text x="110.2" y="416.4" font-size="12.1" fill="#fff" textLength="89.4" lengthAdjust="spacingAndGlyphs" stroke="#fff" stroke-width="0.25">Owner Controller</text>
<circle cx="210.6" cy="412.2" r="4.5" fill="#111" stroke="#0aa4ef" stroke-width="2.2"/>
<path d="M216.5,409.4 l3,2.8 l-3,2.8 z" fill="#0aa4ef"/>
<text x="110.2" y="442.4" font-size="12.1" fill="#fff" textLength="89.4" lengthAdjust="spacingAndGlyphs" stroke="#fff" stroke-width="0.25">Controlled Pawn</text>
<circle cx="210.6" cy="438.2" r="5.6" fill="#0aa4ef"/>
<path d="M216.5,435.4 l3,2.8 l-3,2.8 z" fill="#0aa4ef"/>
<text x="123.1" y="468.6" font-size="12.1" fill="#fff" textLength="76.5" lengthAdjust="spacingAndGlyphs" stroke="#fff" stroke-width="0.25">Delta Seconds</text>
<circle cx="210.6" cy="464.4" r="4.5" fill="#111" stroke="#86d92c" stroke-width="2.2"/>
<path d="M216.5,461.6 l3,2.8 l-3,2.8 z" fill="#86d92c"/>
<rect x="388.7" y="425.6" width="131.5" height="32.6" rx="16.3" fill="none" stroke="#050505" stroke-width="1.25"/>
<path d="M391.1,441.9 A14.7,14.7 0 0 1 406.0,427.2 H503.0 A14.7,14.7 0 0 1 517.9,441.9" fill="none" stroke="url(#gvarhl)" stroke-width="1"/>
<text x="441.4" y="445.7" font-size="12.1" fill="#fff" textLength="45.4" lengthAdjust="spacingAndGlyphs" stroke="#fff" stroke-width="0.25">Smart AI</text>
<circle cx="497.4" cy="441.5" r="5.6" fill="#0aa4ef"/>
<path d="M503.3,438.7 l3,2.8 l-3,2.8 z" fill="#0aa4ef"/>
<rect x="547.4" y="345.7" width="223.3" height="91.5" rx="9.5" fill="#000" opacity="0.35" filter="url(#blur4)"/>
<rect x="551.1" y="345.4" width="215.9" height="84.1" rx="5.8" fill="url(#gbody)" stroke="#060606" stroke-width="2.3"/>
<path d="M552.4,368.0 V351.7 Q552.4,346.7 557.4,346.7 H760.7 Q765.7,346.7 765.7,351.7 V368.0 Z" fill="url(#hgrey)"/>
<linearGradient id="fd2" x1="0" y1="0.528" x2="1" y2="0.472"><stop offset="0" stop-color="#1b1d1b" stop-opacity="0"/><stop offset="0.30" stop-color="#1b1d1b" stop-opacity="0.06"/><stop offset="0.52" stop-color="#1b1d1b" stop-opacity="0.88"/><stop offset="1" stop-color="#1b1d1b" stop-opacity="0.96"/></linearGradient>
<path d="M552.4,368.0 V351.7 Q552.4,346.7 557.4,346.7 H760.7 Q765.7,346.7 765.7,351.7 V368.0 Z" fill="url(#fd2)"/>
<path d="M552.4,368.0 V351.7 Q552.4,346.7 557.4,346.7 H760.7 Q765.7,346.7 765.7,351.7 V368.0 Z" fill="url(#ggloss)"/>
<text x="562.9" y="361.6" font-size="14.5" fill="#fff" font-weight="bold" textLength="8.0" lengthAdjust="spacingAndGlyphs">?</text>
<text x="580.0" y="361.2" font-size="12.7" fill="#fff" font-weight="bold" textLength="39.3" lengthAdjust="spacingAndGlyphs">IsValid</text>
<path d="M564.2,378.4 h4.6 l5.5,6.6 l-5.5,6.6 h-4.6 q-1.2,0 -1.2,-1.2 v-10.8 q0,-1.2 1.2,-1.2 z" fill="#fff"/>
<text x="580.2" y="389.2" font-size="12.1" fill="#fff" textLength="25.2" lengthAdjust="spacingAndGlyphs" stroke="#fff" stroke-width="0.25">Exec</text>
<circle cx="568.3" cy="412.4" r="5.6" fill="#0aa4ef"/>
<path d="M574.2,409.6 l3,2.8 l-3,2.8 z" fill="#0aa4ef"/>
<text x="583.2" y="416.6" font-size="12.1" fill="#fff" textLength="64.5" lengthAdjust="spacingAndGlyphs" stroke="#fff" stroke-width="0.25">Input Object</text>
<text x="698.2" y="389.2" font-size="12.1" fill="#fff" textLength="39.5" lengthAdjust="spacingAndGlyphs" stroke="#fff" stroke-width="0.25">Is Valid</text>
<path d="M744.7,378.4 h4.6 l5.5,6.6 l-5.5,6.6 h-4.6 q-1.2,0 -1.2,-1.2 v-10.8 q0,-1.2 1.2,-1.2 z" fill="#fff"/>
<text x="676.5" y="417.4" font-size="12.1" fill="#fff" textLength="61.2" lengthAdjust="spacingAndGlyphs" stroke="#fff" stroke-width="0.25">Is Not Valid</text>
<path d="M744.7,406.6 h4.6 l5.5,6.6 l-5.5,6.6 h-4.6 q-1.2,0 -1.2,-1.2 v-10.8 q0,-1.2 1.2,-1.2 z" fill="#fff"/>
<rect x="854.6" y="474.5" width="223.9" height="91.9" rx="9.5" fill="#000" opacity="0.35" filter="url(#blur4)"/>
<rect x="858.3" y="474.2" width="216.5" height="84.5" rx="5.8" fill="url(#gbody)" stroke="#060606" stroke-width="2.3"/>
<path d="M859.6,496.6 V480.5 Q859.6,475.5 864.6,475.5 H1068.5 Q1073.5,475.5 1073.5,480.5 V496.6 Z" fill="url(#hgrey)"/>
<linearGradient id="fd3" x1="0" y1="0.528" x2="1" y2="0.472"><stop offset="0" stop-color="#1b1d1b" stop-opacity="0"/><stop offset="0.30" stop-color="#1b1d1b" stop-opacity="0.06"/><stop offset="0.52" stop-color="#1b1d1b" stop-opacity="0.88"/><stop offset="1" stop-color="#1b1d1b" stop-opacity="0.96"/></linearGradient>
<path d="M859.6,496.6 V480.5 Q859.6,475.5 864.6,475.5 H1068.5 Q1073.5,475.5 1073.5,480.5 V496.6 Z" fill="url(#fd3)"/>
<path d="M859.6,496.6 V480.5 Q859.6,475.5 864.6,475.5 H1068.5 Q1073.5,475.5 1073.5,480.5 V496.6 Z" fill="url(#ggloss)"/>
<text x="870.1" y="490.2" font-size="14.5" fill="#fff" font-weight="bold" textLength="8.0" lengthAdjust="spacingAndGlyphs">?</text>
<text x="887.2" y="489.8" font-size="12.7" fill="#fff" font-weight="bold" textLength="39.3" lengthAdjust="spacingAndGlyphs">IsValid</text>
<path d="M871.4,508.0 h4.6 l5.5,6.6 l-5.5,6.6 h-4.6 q-1.2,0 -1.2,-1.2 v-10.8 q0,-1.2 1.2,-1.2 z" fill="#fff"/>
<text x="887.4" y="518.8" font-size="12.1" fill="#fff" textLength="25.2" lengthAdjust="spacingAndGlyphs" stroke="#fff" stroke-width="0.25">Exec</text>
<circle cx="875.5" cy="541.8" r="5.6" fill="#0aa4ef"/>
<path d="M881.4,539.0 l3,2.8 l-3,2.8 z" fill="#0aa4ef"/>
<text x="890.4" y="546.0" font-size="12.1" fill="#fff" textLength="64.5" lengthAdjust="spacingAndGlyphs" stroke="#fff" stroke-width="0.25">Input Object</text>
<text x="1006.0" y="518.8" font-size="12.1" fill="#fff" textLength="39.5" lengthAdjust="spacingAndGlyphs" stroke="#fff" stroke-width="0.25">Is Valid</text>
<path d="M1052.5,508.0 h4.6 l5.5,6.6 l-5.5,6.6 h-4.6 q-1.2,0 -1.2,-1.2 v-10.8 q0,-1.2 1.2,-1.2 z" fill="#fff"/>
<text x="984.3" y="546.8" font-size="12.1" fill="#fff" textLength="61.2" lengthAdjust="spacingAndGlyphs" stroke="#fff" stroke-width="0.25">Is Not Valid</text>
<path d="M1053.2,536.4 h4.2 l5.4,6.2 l-5.4,6.2 h-4.2 q-1.2,0 -1.2,-1.2 v-10 q0,-1.2 1.2,-1.2 z" fill="#171917" stroke="#fff" stroke-width="1.4" stroke-linejoin="round"/>
<rect x="498.8" y="571.7" width="304.8" height="121.5" rx="9.5" fill="#000" opacity="0.35" filter="url(#blur4)"/>
<rect x="502.5" y="571.4" width="297.4" height="114.1" rx="5.8" fill="url(#gbody)" stroke="#060606" stroke-width="2.3"/>
<path d="M503.8,610.0 V577.7 Q503.8,572.7 508.8,572.7 H793.6 Q798.6,572.7 798.6,577.7 V610.0 Z" fill="url(#hgreen)"/>
<linearGradient id="fd4" x1="0" y1="0.520" x2="1" y2="0.480"><stop offset="0" stop-color="#1b1d1b" stop-opacity="0"/><stop offset="0.42" stop-color="#1b1d1b" stop-opacity="0.06"/><stop offset="0.72" stop-color="#1b1d1b" stop-opacity="0.75"/><stop offset="1" stop-color="#1b1d1b" stop-opacity="0.83"/></linearGradient>
<path d="M503.8,610.0 V577.7 Q503.8,572.7 508.8,572.7 H793.6 Q798.6,572.7 798.6,577.7 V610.0 Z" fill="url(#fd4)"/>
<path d="M503.8,610.0 V577.7 Q503.8,572.7 508.8,572.7 H793.6 Q798.6,572.7 798.6,577.7 V610.0 Z" fill="url(#ggloss)"/>
<text transform="translate(517.1,587.8) scale(1.15,1)" font-family="DejaVu Serif,serif" font-style="italic" font-size="16.6" fill="#a4ef84" stroke="#a4ef84" stroke-width="0.35">&#402;</text>
<text x="531.2" y="587.0" font-size="12.7" fill="#fff" font-weight="bold" textLength="141.2" lengthAdjust="spacingAndGlyphs">Get Component by Class</text>
<text x="531.2" y="603.6" font-size="11.8" fill="#b4c08e" font-style="italic" textLength="78.4" lengthAdjust="spacingAndGlyphs">Target is Actor</text>
<circle cx="518.3" cy="626.3" r="5.6" fill="#0aa4ef"/>
<path d="M524.2,623.5 l3,2.8 l-3,2.8 z" fill="#0aa4ef"/>
<text x="533.4" y="630.5" font-size="12.1" fill="#fff" textLength="34.5" lengthAdjust="spacingAndGlyphs" stroke="#fff" stroke-width="0.25">Target</text>
<text x="698.2" y="630.5" font-size="12.1" fill="#fff" textLength="69.8" lengthAdjust="spacingAndGlyphs" stroke="#fff" stroke-width="0.25">Return Value</text>
<circle cx="779.6" cy="626.3" r="5.6" fill="#0aa4ef"/>
<path d="M785.5,623.5 l3,2.8 l-3,2.8 z" fill="#0aa4ef"/>
<text x="533.4" y="656.6" font-size="12.1" fill="#fff" textLength="95.5" lengthAdjust="spacingAndGlyphs" stroke="#fff" stroke-width="0.25">Component Class</text>
<circle cx="518.3" cy="662.0" r="4.5" fill="#111" stroke="#5b05b5" stroke-width="2.2"/>
<path d="M524.2,659.2 l3,2.8 l-3,2.8 z" fill="#5b05b5"/>
<rect x="540" y="660.2" width="101.6" height="17.6" rx="2.5" fill="#2c2e2c"/>
<text x="543.5" y="672.2" font-size="10.3" fill="#b8b8b8" textLength="84.0" lengthAdjust="spacingAndGlyphs">BP Smart AICom</text>
<path d="M630,666.5 h8.4 l-4.2,4.6 z" fill="#d8d8d8"/>
<path d="M646,669 l6,-5 v3 h5 v4 h-5 v3 z" fill="#555"/>
<circle cx="667" cy="668" r="4" fill="none" stroke="#555" stroke-width="1.6"/><path d="M664,671 l-3,3.4" stroke="#555" stroke-width="1.8"/>
<rect x="1215.4" y="490.29999999999995" width="140.6" height="67.4" rx="10.1" fill="none" stroke="#050505" stroke-width="1.8"/>
<path d="M1217.1,502.4 V500.4 A8.4,8.4 0 0 1 1225.5,492.0 H1345.9 A8.4,8.4 0 0 1 1354.3,500.4 v2" fill="none" stroke="url(#gvarhl)" stroke-width="1"/>
<text x="1274.2" y="508.9" font-size="11.4" fill="#fff" font-weight="bold" textLength="22.0" lengthAdjust="spacingAndGlyphs">SET</text>
<path d="M1229.9,508.3 h4.6 l5.5,6.6 l-5.5,6.6 h-4.6 q-1.2,0 -1.2,-1.2 v-10.8 q0,-1.2 1.2,-1.2 z" fill="#fff"/>
<path d="M1332.3,508.3 h4.6 l5.5,6.6 l-5.5,6.6 h-4.6 q-1.2,0 -1.2,-1.2 v-10.8 q0,-1.2 1.2,-1.2 z" fill="#fff"/>
<circle cx="1233.5" cy="541.6" r="5.6" fill="#0aa4ef"/>
<path d="M1239.4,538.8 l3,2.8 l-3,2.8 z" fill="#0aa4ef"/>
<text x="1248.4" y="545.8" font-size="12.1" fill="#fff" textLength="45.3" lengthAdjust="spacingAndGlyphs" stroke="#fff" stroke-width="0.25">Smart AI</text>
<circle cx="1333.6" cy="541.6" r="4.5" fill="#111" stroke="#0aa4ef" stroke-width="2.2"/>
<path d="M1339.5,538.8 l3,2.8 l-3,2.8 z" fill="#0aa4ef"/>
<rect x="1520.8" y="423.4" width="135.0" height="37.1" rx="18.4" fill="none" stroke="url(#gsel)" stroke-width="3.8"/>
<rect x="1523.3" y="425.9" width="130.0" height="31.8" rx="15.9" fill="none" stroke="#050505" stroke-width="1.25"/>
<path d="M1525.7,441.8 A14.3,14.3 0 0 1 1540.2,427.5 H1636.4 A14.3,14.3 0 0 1 1650.9,441.8" fill="none" stroke="url(#gvarhl)" stroke-width="1"/>
<text x="1575.3" y="445.8" font-size="12.1" fill="#fff" textLength="45.4" lengthAdjust="spacingAndGlyphs" stroke="#fff" stroke-width="0.25">Smart AI</text>
<circle cx="1631.8" cy="441.6" r="5.6" fill="#0aa4ef"/>
<path d="M1637.7,438.8 l3,2.8 l-3,2.8 z" fill="#0aa4ef"/>
<rect x="1666.6" y="423.4" width="212.0" height="37.1" rx="18.4" fill="none" stroke="url(#gsel)" stroke-width="3.8"/>
<rect x="1669.1" y="425.9" width="207.0" height="31.8" rx="15.9" fill="none" stroke="#050505" stroke-width="1.25"/>
<path d="M1671.5,441.8 A14.3,14.3 0 0 1 1686.0,427.5 H1859.2 A14.3,14.3 0 0 1 1873.7,441.8" fill="none" stroke="url(#gvarhl)" stroke-width="1"/>
<circle cx="1687.4" cy="441.6" r="5.6" fill="#0aa4ef"/>
<path d="M1693.3,438.8 l3,2.8 l-3,2.8 z" fill="#0aa4ef"/>
<text x="1702.5" y="445.8" font-size="12.1" fill="#fff" textLength="34.5" lengthAdjust="spacingAndGlyphs" stroke="#fff" stroke-width="0.25">Target</text>
<text x="1770.5" y="445.8" font-size="12.1" fill="#fff" textLength="72.2" lengthAdjust="spacingAndGlyphs" stroke="#fff" stroke-width="0.25">Attack Target</text>
<circle cx="1853.6" cy="441.6" r="5.6" fill="#0aa4ef"/>
<path d="M1859.5,438.8 l3,2.8 l-3,2.8 z" fill="#0aa4ef"/>
<rect x="1731.3" y="553.5" width="134.5" height="36.2" rx="18.0" fill="none" stroke="url(#gsel)" stroke-width="3.8"/>
<rect x="1733.8" y="556.0" width="129.5" height="30.9" rx="15.4" fill="none" stroke="#050505" stroke-width="1.25"/>
<path d="M1736.2,571.5 A13.9,13.9 0 0 1 1750.2,557.6 H1846.9 A13.9,13.9 0 0 1 1860.9,571.5" fill="none" stroke="url(#gvarhl)" stroke-width="1"/>
<text x="1785.3" y="575.2" font-size="12.1" fill="#fff" textLength="45.4" lengthAdjust="spacingAndGlyphs" stroke="#fff" stroke-width="0.25">Smart AI</text>
<circle cx="1841.8" cy="571.0" r="5.6" fill="#0aa4ef"/>
<path d="M1847.7,568.2 l3,2.8 l-3,2.8 z" fill="#0aa4ef"/>
<rect x="1876.8" y="553.5" width="206.2" height="36.2" rx="18.0" fill="none" stroke="url(#gsel)" stroke-width="3.8"/>
<rect x="1879.3" y="556.0" width="201.1" height="30.9" rx="15.4" fill="none" stroke="#050505" stroke-width="1.25"/>
<path d="M1881.7,571.5 A13.9,13.9 0 0 1 1895.8,557.6 H2064.0 A13.9,13.9 0 0 1 2078.1,571.5" fill="none" stroke="url(#gvarhl)" stroke-width="1"/>
<circle cx="1897.6" cy="571.0" r="5.6" fill="#0aa4ef"/>
<path d="M1903.5,568.2 l3,2.8 l-3,2.8 z" fill="#0aa4ef"/>
<text x="1912.7" y="575.2" font-size="12.1" fill="#fff" textLength="34.5" lengthAdjust="spacingAndGlyphs" stroke="#fff" stroke-width="0.25">Target</text>
<text x="1980.6" y="575.2" font-size="12.1" fill="#fff" textLength="66.5" lengthAdjust="spacingAndGlyphs" stroke="#fff" stroke-width="0.25">AI Controller</text>
<circle cx="2058.0" cy="571.0" r="5.6" fill="#0aa4ef"/>
<path d="M2063.9,568.2 l3,2.8 l-3,2.8 z" fill="#0aa4ef"/>
<rect x="1731.3" y="634.1" width="134.5" height="36.9" rx="18.3" fill="none" stroke="url(#gsel)" stroke-width="3.8"/>
<rect x="1733.8" y="636.6" width="129.5" height="31.5" rx="15.8" fill="none" stroke="#050505" stroke-width="1.25"/>
<path d="M1736.2,652.4 A14.2,14.2 0 0 1 1750.6,638.2 H1846.5 A14.2,14.2 0 0 1 1860.9,652.4" fill="none" stroke="url(#gvarhl)" stroke-width="1"/>
<text x="1785.3" y="655.9" font-size="12.1" fill="#fff" textLength="45.4" lengthAdjust="spacingAndGlyphs" stroke="#fff" stroke-width="0.25">Smart AI</text>
<circle cx="1841.8" cy="651.7" r="5.6" fill="#0aa4ef"/>
<path d="M1847.7,648.9 l3,2.8 l-3,2.8 z" fill="#0aa4ef"/>
<rect x="1876.8" y="634.1" width="211.9" height="36.9" rx="18.3" fill="none" stroke="url(#gsel)" stroke-width="3.8"/>
<rect x="1879.3" y="636.6" width="206.9" height="31.5" rx="15.8" fill="none" stroke="#050505" stroke-width="1.25"/>
<path d="M1881.7,652.4 A14.2,14.2 0 0 1 1896.1,638.2 H2069.4 A14.2,14.2 0 0 1 2083.8,652.4" fill="none" stroke="url(#gvarhl)" stroke-width="1"/>
<circle cx="1897.6" cy="651.7" r="5.6" fill="#0aa4ef"/>
<path d="M1903.5,648.9 l3,2.8 l-3,2.8 z" fill="#0aa4ef"/>
<text x="1912.7" y="655.9" font-size="12.1" fill="#fff" textLength="34.5" lengthAdjust="spacingAndGlyphs" stroke="#fff" stroke-width="0.25">Target</text>
<text x="1980.3" y="655.9" font-size="12.1" fill="#fff" textLength="72.5" lengthAdjust="spacingAndGlyphs" stroke="#fff" stroke-width="0.25">Attack Target</text>
<circle cx="2063.7" cy="651.7" r="5.6" fill="#0aa4ef"/>
<path d="M2069.6,648.9 l3,2.8 l-3,2.8 z" fill="#0aa4ef"/>
<rect x="1892.6" y="329.1" width="273.2" height="104.8" rx="9.5" fill="#000" opacity="0.35" filter="url(#blur4)"/>
<rect x="1893.6" y="326.2" width="271.1" height="103.0" rx="8.4" fill="none" stroke="url(#gsel)" stroke-width="3.9"/>
<rect x="1896.6" y="329.1" width="265.2" height="96.8" rx="5.5" fill="url(#gbody)" stroke="#060606" stroke-width="2"/>
<rect x="1897.1" y="329.6" width="264.2" height="95.8" rx="5.0" fill="none" stroke="url(#gselglow)" stroke-width="3.4"/>
<path d="M1897.6,366.6 V335.1 Q1897.6,330.1 1902.6,330.1 H2155.8 Q2160.8,330.1 2160.8,335.1 V366.6 Z" fill="url(#hblue)"/>
<linearGradient id="fd5" x1="0" y1="0.522" x2="1" y2="0.478"><stop offset="0" stop-color="#1b1d1b" stop-opacity="0"/><stop offset="0.45" stop-color="#1b1d1b" stop-opacity="0.06"/><stop offset="1.00" stop-color="#1b1d1b" stop-opacity="0.5"/><stop offset="1" stop-color="#1b1d1b" stop-opacity="0.58"/></linearGradient>
<path d="M1897.6,366.6 V335.1 Q1897.6,330.1 1902.6,330.1 H2155.8 Q2160.8,330.1 2160.8,335.1 V366.6 Z" fill="url(#fd5)"/>
<path d="M1897.6,366.6 V335.1 Q1897.6,330.1 1902.6,330.1 H2155.8 Q2160.8,330.1 2160.8,335.1 V366.6 Z" fill="url(#ggloss)"/>
<text transform="translate(1911.1,345.0) scale(1.15,1)" font-family="DejaVu Serif,serif" font-style="italic" font-size="16.6" fill="#7cc6f6" stroke="#7cc6f6" stroke-width="0.35">&#402;</text>
<text x="1925.3" y="344.3" font-size="12.7" fill="#fff" font-weight="bold" textLength="65.0" lengthAdjust="spacingAndGlyphs">AI Is Dead?</text>
<text x="1925.3" y="360.4" font-size="11.8" fill="#b4c08e" font-style="italic" textLength="208.4" lengthAdjust="spacingAndGlyphs">Using Interface SKEL_BP_AIInterface_C</text>
<path d="M1907.7,378.4 h4.6 l5.5,6.6 l-5.5,6.6 h-4.6 q-1.2,0 -1.2,-1.2 v-10.8 q0,-1.2 1.2,-1.2 z" fill="#fff"/>
<path d="M2141.4,378.4 h4.6 l5.5,6.6 l-5.5,6.6 h-4.6 q-1.2,0 -1.2,-1.2 v-10.8 q0,-1.2 1.2,-1.2 z" fill="#fff"/>
<circle cx="1911.6" cy="411.7" r="5.6" fill="#0aa4ef"/>
<path d="M1917.5,408.9 l3,2.8 l-3,2.8 z" fill="#0aa4ef"/>
<text x="1927.0" y="415.9" font-size="12.1" fill="#fff" textLength="34.5" lengthAdjust="spacingAndGlyphs" stroke="#fff" stroke-width="0.25">Target</text>
<text x="2104.2" y="415.9" font-size="12.1" fill="#fff" textLength="27.3" lengthAdjust="spacingAndGlyphs" stroke="#fff" stroke-width="0.25">Dead</text>
<circle cx="2142.6" cy="411.7" r="5.6" fill="#8f0303"/>
<path d="M2148.5,408.9 l3,2.8 l-3,2.8 z" fill="#8f0303"/>
<g transform="translate(2148.5,318)"><path d="M1.5,12 H27 V26 H1.5 Z" fill="#000" opacity="0.55"/><path d="M0,10 L12.5,0 L25,10 V24 H0 Z" fill="#86acc9" stroke="#2b3f55" stroke-width="0.8"/><path d="M1.5,11 H23.5 V23 H1.5 Z" fill="#eef4fa"/><path d="M1.5,11 L12.5,19 L23.5,11" fill="none" stroke="#9db6cc" stroke-width="1.2"/><path d="M1.5,23 L9.5,16.5 M23.5,23 L15.5,16.5" stroke="#b5c8da" stroke-width="1"/></g>
<rect x="2200.5" y="345.7" width="176.0" height="91.3" rx="9.5" fill="#000" opacity="0.35" filter="url(#blur4)"/>
<rect x="2201.6" y="342.8" width="173.9" height="89.5" rx="8.4" fill="none" stroke="url(#gsel)" stroke-width="3.9"/>
<rect x="2204.5" y="345.7" width="168.0" height="83.3" rx="5.5" fill="url(#gbody)" stroke="#060606" stroke-width="2"/>
<rect x="2205.0" y="346.2" width="167.0" height="82.3" rx="5.0" fill="none" stroke="url(#gselglow)" stroke-width="3.4"/>
<path d="M2205.5,368.2 V351.7 Q2205.5,346.7 2210.5,346.7 H2366.5 Q2371.5,346.7 2371.5,351.7 V368.2 Z" fill="url(#hgrey)"/>
<linearGradient id="fd6" x1="0" y1="0.535" x2="1" y2="0.465"><stop offset="0" stop-color="#1b1d1b" stop-opacity="0"/><stop offset="0.38" stop-color="#1b1d1b" stop-opacity="0.06"/><stop offset="0.62" stop-color="#1b1d1b" stop-opacity="0.88"/><stop offset="1" stop-color="#1b1d1b" stop-opacity="0.96"/></linearGradient>
<path d="M2205.5,368.2 V351.7 Q2205.5,346.7 2210.5,346.7 H2366.5 Q2371.5,346.7 2371.5,351.7 V368.2 Z" fill="url(#fd6)"/>
<path d="M2205.5,368.2 V351.7 Q2205.5,346.7 2210.5,346.7 H2366.5 Q2371.5,346.7 2371.5,351.7 V368.2 Z" fill="url(#ggloss)"/>
<path d="M2213.7,356.6 h3.5 M2225.7,351.4 h-3.3 a5.2,5.2 0 0 0 0,10.4 h3.3" fill="none" stroke="#fff" stroke-width="1.5"/>
<path d="M2225.1,349.0 l3.2,2.4 l-3.2,2.4 z M2225.1,359.4 l3.2,2.4 l-3.2,2.4 z" fill="#fff"/>
<text x="2232.2" y="361.0" font-size="12.7" fill="#fff" font-weight="bold" textLength="41.0" lengthAdjust="spacingAndGlyphs">Branch</text>
<path d="M2215.7,378.4 h4.6 l5.5,6.6 l-5.5,6.6 h-4.6 q-1.2,0 -1.2,-1.2 v-10.8 q0,-1.2 1.2,-1.2 z" fill="#fff"/>
<circle cx="2219.9" cy="411.7" r="5.6" fill="#8f0303"/>
<path d="M2225.8,408.9 l3,2.8 l-3,2.8 z" fill="#8f0303"/>
<text x="2234.3" y="415.9" font-size="12.1" fill="#fff" textLength="52.1" lengthAdjust="spacingAndGlyphs" stroke="#fff" stroke-width="0.25">Condition</text>
<text x="2322.0" y="389.2" font-size="12.1" fill="#fff" textLength="24.0" lengthAdjust="spacingAndGlyphs" stroke="#fff" stroke-width="0.25">True</text>
<path d="M2352.7,378.4 h4.6 l5.5,6.6 l-5.5,6.6 h-4.6 q-1.2,0 -1.2,-1.2 v-10.8 q0,-1.2 1.2,-1.2 z" fill="#fff"/>
<text x="2317.4" y="416.7" font-size="12.1" fill="#fff" textLength="28.6" lengthAdjust="spacingAndGlyphs" stroke="#fff" stroke-width="0.25">False</text>
<path d="M2352.7,405.9 h4.6 l5.5,6.6 l-5.5,6.6 h-4.6 q-1.2,0 -1.2,-1.2 v-10.8 q0,-1.2 1.2,-1.2 z" fill="#fff"/>
<rect x="2669.5" y="539.2" width="178.2" height="92.3" rx="9.5" fill="#000" opacity="0.35" filter="url(#blur4)"/>
<rect x="2673.2" y="538.9" width="170.8" height="84.9" rx="5.8" fill="url(#gbody)" stroke="#060606" stroke-width="2.3"/>
<path d="M2674.5,562.4 V545.2 Q2674.5,540.2 2679.5,540.2 H2837.7 Q2842.7,540.2 2842.7,545.2 V562.4 Z" fill="url(#hgrey)"/>
<linearGradient id="fd7" x1="0" y1="0.535" x2="1" y2="0.465"><stop offset="0" stop-color="#1b1d1b" stop-opacity="0"/><stop offset="0.38" stop-color="#1b1d1b" stop-opacity="0.06"/><stop offset="0.62" stop-color="#1b1d1b" stop-opacity="0.88"/><stop offset="1" stop-color="#1b1d1b" stop-opacity="0.96"/></linearGradient>
<path d="M2674.5,562.4 V545.2 Q2674.5,540.2 2679.5,540.2 H2837.7 Q2842.7,540.2 2842.7,545.2 V562.4 Z" fill="url(#fd7)"/>
<path d="M2674.5,562.4 V545.2 Q2674.5,540.2 2679.5,540.2 H2837.7 Q2842.7,540.2 2842.7,545.2 V562.4 Z" fill="url(#ggloss)"/>
<path d="M2683.8,550.8 h3.5 M2695.8,545.6 h-3.3 a5.2,5.2 0 0 0 0,10.4 h3.3" fill="none" stroke="#fff" stroke-width="1.5"/>
<path d="M2695.2,543.2 l3.2,2.4 l-3.2,2.4 z M2695.2,553.6 l3.2,2.4 l-3.2,2.4 z" fill="#fff"/>
<text x="2702.3" y="555.2" font-size="12.7" fill="#fff" font-weight="bold" textLength="41.0" lengthAdjust="spacingAndGlyphs">Branch</text>
<path d="M2685.8,572.9 h4.6 l5.5,6.6 l-5.5,6.6 h-4.6 q-1.2,0 -1.2,-1.2 v-10.8 q0,-1.2 1.2,-1.2 z" fill="#fff"/>
<circle cx="2690.0" cy="606.8" r="5.6" fill="#8f0303"/>
<path d="M2695.9,604.0 l3,2.8 l-3,2.8 z" fill="#8f0303"/>
<text x="2704.4" y="610.0" font-size="12.1" fill="#fff" textLength="52.1" lengthAdjust="spacingAndGlyphs" stroke="#fff" stroke-width="0.25">Condition</text>
<text x="2792.1" y="582.7" font-size="12.1" fill="#fff" textLength="24.0" lengthAdjust="spacingAndGlyphs" stroke="#fff" stroke-width="0.25">True</text>
<path d="M2822.8,572.9 h4.6 l5.5,6.6 l-5.5,6.6 h-4.6 q-1.2,0 -1.2,-1.2 v-10.8 q0,-1.2 1.2,-1.2 z" fill="#fff"/>
<text x="2787.5" y="610.8" font-size="12.1" fill="#fff" textLength="28.6" lengthAdjust="spacingAndGlyphs" stroke="#fff" stroke-width="0.25">False</text>
<path d="M2822.8,601.0 h4.6 l5.5,6.6 l-5.5,6.6 h-4.6 q-1.2,0 -1.2,-1.2 v-10.8 q0,-1.2 1.2,-1.2 z" fill="#fff"/>
<rect x="2183.7" y="555.7" width="304.8" height="183.6" rx="9.5" fill="#000" opacity="0.35" filter="url(#blur4)"/>
<rect x="2184.8" y="552.8" width="302.7" height="181.8" rx="8.4" fill="none" stroke="url(#gsel)" stroke-width="3.9"/>
<rect x="2187.7" y="555.7" width="296.8" height="175.6" rx="5.5" fill="url(#gbody)" stroke="#060606" stroke-width="2"/>
<rect x="2188.2" y="556.2" width="295.8" height="174.6" rx="5.0" fill="none" stroke="url(#gselglow)" stroke-width="3.4"/>
<path d="M2188.7,593.8 V561.7 Q2188.7,556.7 2193.7,556.7 H2478.5 Q2483.5,556.7 2483.5,561.7 V593.8 Z" fill="url(#hgreen)"/>
<linearGradient id="fd8" x1="0" y1="0.520" x2="1" y2="0.480"><stop offset="0" stop-color="#1b1d1b" stop-opacity="0"/><stop offset="0.36" stop-color="#1b1d1b" stop-opacity="0.06"/><stop offset="0.60" stop-color="#1b1d1b" stop-opacity="0.75"/><stop offset="1" stop-color="#1b1d1b" stop-opacity="0.83"/></linearGradient>
<path d="M2188.7,593.8 V561.7 Q2188.7,556.7 2193.7,556.7 H2478.5 Q2483.5,556.7 2483.5,561.7 V593.8 Z" fill="url(#fd8)"/>
<path d="M2188.7,593.8 V561.7 Q2188.7,556.7 2193.7,556.7 H2478.5 Q2483.5,556.7 2483.5,561.7 V593.8 Z" fill="url(#ggloss)"/>
<text transform="translate(2202.0,571.8) scale(1.15,1)" font-family="DejaVu Serif,serif" font-style="italic" font-size="16.6" fill="#a4ef84" stroke="#a4ef84" stroke-width="0.35">&#402;</text>
<text x="2216.3" y="570.8" font-size="12.7" fill="#fff" font-weight="bold" textLength="91.1" lengthAdjust="spacingAndGlyphs">Line Of Sight To</text>
<text x="2216.3" y="587.6" font-size="11.8" fill="#b4c08e" font-style="italic" textLength="103.2" lengthAdjust="spacingAndGlyphs">Target is Controller</text>
<circle cx="2203.6" cy="609.8" r="5.6" fill="#0aa4ef"/>
<path d="M2209.5,607.0 l3,2.8 l-3,2.8 z" fill="#0aa4ef"/>
<text x="2218.2" y="614.0" font-size="12.1" fill="#fff" textLength="34.5" lengthAdjust="spacingAndGlyphs" stroke="#fff" stroke-width="0.25">Target</text>
<circle cx="2203.6" cy="636.7" r="5.6" fill="#0aa4ef"/>
<path d="M2209.5,633.9 l3,2.8 l-3,2.8 z" fill="#0aa4ef"/>
<text x="2218.2" y="640.9" font-size="12.1" fill="#fff" textLength="29.0" lengthAdjust="spacingAndGlyphs" stroke="#fff" stroke-width="0.25">Other</text>
<text x="2218.2" y="666.7" font-size="12.1" fill="#fff" textLength="58.0" lengthAdjust="spacingAndGlyphs" stroke="#fff" stroke-width="0.25">View Point</text>
<circle cx="2203.6" cy="674.9" r="4.5" fill="#111" stroke="#f3c41a" stroke-width="2.2"/>
<path d="M2209.5,672.1 l3,2.8 l-3,2.8 z" fill="#f3c41a"/>
<rect x="2225.5" y="672.8" width="40.4" height="17.8" fill="#161816" stroke="#d0d0d0" stroke-width="1.1"/>
<text x="2228.6" y="686.0" font-size="11.5" fill="#6f6f6f" textLength="7.7" lengthAdjust="spacingAndGlyphs">X</text>
<text x="2246.1" y="686.0" font-size="11.5" fill="#e8e8e8" textLength="16.5" lengthAdjust="spacingAndGlyphs">0.0</text>
<rect x="2271.8" y="672.8" width="40.4" height="17.8" fill="#161816" stroke="#d0d0d0" stroke-width="1.1"/>
<text x="2274.9" y="686.0" font-size="11.5" fill="#6f6f6f" textLength="7.7" lengthAdjust="spacingAndGlyphs">Y</text>
<text x="2292.4" y="686.0" font-size="11.5" fill="#e8e8e8" textLength="16.5" lengthAdjust="spacingAndGlyphs">0.0</text>
<rect x="2317.7000000000003" y="672.8" width="40.4" height="17.8" fill="#161816" stroke="#d0d0d0" stroke-width="1.1"/>
<text x="2320.8" y="686.0" font-size="11.5" fill="#6f6f6f" textLength="7.0" lengthAdjust="spacingAndGlyphs">Z</text>
<text x="2338.3" y="686.0" font-size="11.5" fill="#e8e8e8" textLength="16.5" lengthAdjust="spacingAndGlyphs">0.0</text>
<text x="2218.2" y="716.0" font-size="12.1" fill="#fff" textLength="91.0" lengthAdjust="spacingAndGlyphs" stroke="#fff" stroke-width="0.25">Alternate Checks</text>
<circle cx="2203.6" cy="715.0" r="4.5" fill="#111" stroke="#8f0303" stroke-width="2.2"/>
<path d="M2209.5,712.2 l3,2.8 l-3,2.8 z" fill="#8f0303"/>
<rect x="2317.7" y="707.9" width="14.6" height="14.6" rx="2.6" fill="#2a2c2a" stroke="#d9d9d9" stroke-width="2"/>
<text x="2385.2" y="614.0" font-size="12.1" fill="#fff" textLength="69.8" lengthAdjust="spacingAndGlyphs" stroke="#fff" stroke-width="0.25">Return Value</text>
<circle cx="2465.9" cy="609.8" r="5.6" fill="#8f0303"/>
<path d="M2471.8,607.0 l3,2.8 l-3,2.8 z" fill="#8f0303"/>
<rect x="2525.4" y="422.8" width="134.8" height="38.2" rx="19.0" fill="none" stroke="url(#gsel)" stroke-width="3.8"/>
<rect x="2527.9" y="425.3" width="129.8" height="32.9" rx="16.4" fill="none" stroke="#050505" stroke-width="1.25"/>
<path d="M2530.3,441.8 A14.9,14.9 0 0 1 2545.4,426.9 H2640.2 A14.9,14.9 0 0 1 2655.3,441.8" fill="none" stroke="url(#gvarhl)" stroke-width="1"/>
<text x="2579.7" y="445.7" font-size="12.1" fill="#fff" textLength="45.4" lengthAdjust="spacingAndGlyphs" stroke="#fff" stroke-width="0.25">Smart AI</text>
<circle cx="2636.2" cy="441.5" r="5.6" fill="#0aa4ef"/>
<path d="M2642.1,438.7 l3,2.8 l-3,2.8 z" fill="#0aa4ef"/>
<rect x="2686.6" y="328.9" width="241.2" height="130.8" rx="9.5" fill="#000" opacity="0.35" filter="url(#blur4)"/>
<rect x="2687.7" y="325.9" width="239.1" height="129.0" rx="8.4" fill="none" stroke="url(#gsel)" stroke-width="3.9"/>
<rect x="2690.6" y="328.9" width="233.2" height="122.8" rx="5.5" fill="url(#gbody)" stroke="#060606" stroke-width="2"/>
<rect x="2691.1" y="329.4" width="232.2" height="121.8" rx="5.0" fill="none" stroke="url(#gselglow)" stroke-width="3.4"/>
<path d="M2691.6,366.5 V334.9 Q2691.6,329.9 2696.6,329.9 H2917.8 Q2922.8,329.9 2922.8,334.9 V366.5 Z" fill="url(#hblue)"/>
<linearGradient id="fd9" x1="0" y1="0.526" x2="1" y2="0.474"><stop offset="0" stop-color="#1b1d1b" stop-opacity="0"/><stop offset="0.45" stop-color="#1b1d1b" stop-opacity="0.06"/><stop offset="1.00" stop-color="#1b1d1b" stop-opacity="0.5"/><stop offset="1" stop-color="#1b1d1b" stop-opacity="0.58"/></linearGradient>
<path d="M2691.6,366.5 V334.9 Q2691.6,329.9 2696.6,329.9 H2917.8 Q2922.8,329.9 2922.8,334.9 V366.5 Z" fill="url(#fd9)"/>
<path d="M2691.6,366.5 V334.9 Q2691.6,329.9 2696.6,329.9 H2917.8 Q2922.8,329.9 2922.8,334.9 V366.5 Z" fill="url(#ggloss)"/>
<text transform="translate(2704.9,345.0) scale(1.15,1)" font-family="DejaVu Serif,serif" font-style="italic" font-size="16.6" fill="#7cc6f6" stroke="#7cc6f6" stroke-width="0.35">&#402;</text>
<text x="2718.4" y="344.3" font-size="12.7" fill="#fff" font-weight="bold" textLength="115.9" lengthAdjust="spacingAndGlyphs">Reset Attack Target</text>
<text x="2718.4" y="360.4" font-size="11.8" fill="#b4c08e" font-style="italic" textLength="177.6" lengthAdjust="spacingAndGlyphs">Target is BP Smart AIComponent</text>
<path d="M2701.2,378.8 h4.6 l5.5,6.6 l-5.5,6.6 h-4.6 q-1.2,0 -1.2,-1.2 v-10.8 q0,-1.2 1.2,-1.2 z" fill="#fff"/>
<path d="M2903.9,379.2 h4.2 l5.4,6.2 l-5.4,6.2 h-4.2 q-1.2,0 -1.2,-1.2 v-10 q0,-1.2 1.2,-1.2 z" fill="#171917" stroke="#fff" stroke-width="1.4" stroke-linejoin="round"/>
<circle cx="2705.1" cy="412.0" r="5.6" fill="#0aa4ef"/>
<path d="M2711.0,409.2 l3,2.8 l-3,2.8 z" fill="#0aa4ef"/>
<text x="2720.5" y="416.2" font-size="12.1" fill="#fff" textLength="34.5" lengthAdjust="spacingAndGlyphs" stroke="#fff" stroke-width="0.25">Target</text>
<text x="2795.5" y="416.2" font-size="12.1" fill="#fff" textLength="98.5" lengthAdjust="spacingAndGlyphs" stroke="#fff" stroke-width="0.25">New Attack Target</text>
<circle cx="2905.1" cy="412.0" r="4.5" fill="#111" stroke="#8f0303" stroke-width="2.2"/>
<path d="M2911.0,409.2 l3,2.8 l-3,2.8 z" fill="#8f0303"/>
<text x="2821.5" y="442.4" font-size="12.1" fill="#fff" textLength="72.5" lengthAdjust="spacingAndGlyphs" stroke="#fff" stroke-width="0.25">Attack Target</text>
<circle cx="2905.1" cy="438.2" r="4.5" fill="#111" stroke="#0aa4ef" stroke-width="2.2"/>
<path d="M2911.0,435.4 l3,2.8 l-3,2.8 z" fill="#0aa4ef"/>
<rect x="3062.0" y="473.9" width="130.7" height="32.3" rx="16.2" fill="none" stroke="#050505" stroke-width="1.25"/>
<path d="M3064.4,490.1 A14.6,14.6 0 0 1 3079.2,475.5 H3175.5 A14.6,14.6 0 0 1 3190.3,490.1" fill="none" stroke="url(#gvarhl)" stroke-width="1"/>
<text x="3114.1" y="494.2" font-size="12.1" fill="#fff" textLength="45.4" lengthAdjust="spacingAndGlyphs" stroke="#fff" stroke-width="0.25">Smart AI</text>
<circle cx="3170.1" cy="490.0" r="5.6" fill="#0aa4ef"/>
<path d="M3176.0,487.2 l3,2.8 l-3,2.8 z" fill="#0aa4ef"/>
<rect x="3206.9" y="473.9" width="204.4" height="32.3" rx="16.2" fill="none" stroke="#050505" stroke-width="1.25"/>
<path d="M3209.3,490.1 A14.6,14.6 0 0 1 3224.1,475.5 H3394.2 A14.6,14.6 0 0 1 3409.0,490.1" fill="none" stroke="url(#gvarhl)" stroke-width="1"/>
<circle cx="3226.6" cy="490.0" r="5.6" fill="#0aa4ef"/>
<path d="M3232.5,487.2 l3,2.8 l-3,2.8 z" fill="#0aa4ef"/>
<text x="3241.5" y="494.2" font-size="12.1" fill="#fff" textLength="34.5" lengthAdjust="spacingAndGlyphs" stroke="#fff" stroke-width="0.25">Target</text>
<text x="3309.5" y="494.2" font-size="12.1" fill="#fff" textLength="72.5" lengthAdjust="spacingAndGlyphs" stroke="#fff" stroke-width="0.25">Attack Target</text>
<circle cx="3392.6" cy="490.0" r="5.6" fill="#0aa4ef"/>
<path d="M3398.5,487.2 l3,2.8 l-3,2.8 z" fill="#0aa4ef"/>
<rect x="3074.3" y="635.9" width="265.7" height="111.1" rx="9.5" fill="#000" opacity="0.35" filter="url(#blur4)"/>
<rect x="3078.0" y="635.6" width="258.3" height="103.7" rx="5.8" fill="url(#gbody)" stroke="#060606" stroke-width="2.3"/>
<path d="M3079.3,675.0 V641.9 Q3079.3,636.9 3084.3,636.9 H3330.0 Q3335.0,636.9 3335.0,641.9 V675.0 Z" fill="url(#hblue)"/>
<linearGradient id="fd10" x1="0" y1="0.523" x2="1" y2="0.477"><stop offset="0" stop-color="#1b1d1b" stop-opacity="0"/><stop offset="0.55" stop-color="#1b1d1b" stop-opacity="0.06"/><stop offset="0.95" stop-color="#1b1d1b" stop-opacity="0.6"/><stop offset="1" stop-color="#1b1d1b" stop-opacity="0.68"/></linearGradient>
<path d="M3079.3,675.0 V641.9 Q3079.3,636.9 3084.3,636.9 H3330.0 Q3335.0,636.9 3335.0,641.9 V675.0 Z" fill="url(#fd10)"/>
<path d="M3079.3,675.0 V641.9 Q3079.3,636.9 3084.3,636.9 H3330.0 Q3335.0,636.9 3335.0,641.9 V675.0 Z" fill="url(#ggloss)"/>
<path d="M3088.3,648.0 L3094.5,641.8 L3100.7,648.0 L3094.5,654.2 Z" fill="none" stroke="#fff" stroke-width="2.2" stroke-linejoin="round"/>
<path d="M3088.5,648.0 l4.6,-3 v6 z" fill="#fff"/>
<text x="3107.3" y="652.2" font-size="12.7" fill="#fff" font-weight="bold" textLength="58.5" lengthAdjust="spacingAndGlyphs">LOS Timer</text>
<text x="3107.3" y="668.6" font-size="11.8" fill="#b4c08e" font-style="italic" textLength="198.5" lengthAdjust="spacingAndGlyphs">Target is BTS Range Attack Location</text>
<path d="M3090.2,686.1 h4.6 l5.5,6.6 l-5.5,6.6 h-4.6 q-1.2,0 -1.2,-1.2 v-10.8 q0,-1.2 1.2,-1.2 z" fill="#fff"/>
<path d="M3313.4,686.5 h4.2 l5.4,6.2 l-5.4,6.2 h-4.2 q-1.2,0 -1.2,-1.2 v-10 q0,-1.2 1.2,-1.2 z" fill="#171917" stroke="#fff" stroke-width="1.4" stroke-linejoin="round"/>
<circle cx="3094.1" cy="720.8" r="4.5" fill="#111" stroke="#0aa4ef" stroke-width="2.2"/>
<path d="M3100.0,718.0 l3,2.8 l-3,2.8 z" fill="#0aa4ef"/>
<text x="3109.2" y="724.0" font-size="12.1" fill="#fff" textLength="34.5" lengthAdjust="spacingAndGlyphs" stroke="#fff" stroke-width="0.25">Target</text>
<rect x="3149.5" y="713.5" width="29" height="17" rx="1.5" fill="#161816" stroke="#e0e0e0" stroke-width="1.1"/>
<text x="3154.5" y="726.4" font-size="11.8" fill="#e0e0e0" textLength="19.0" lengthAdjust="spacingAndGlyphs">self</text>
<rect x="0" y="0" width="3407" height="59.9" fill="url(#gbar)"/>
<path d="M17,38 L27.5,44.5 V41.5 H37.5 V33.5 H27.5 Z" fill="#000" opacity="0.8"/>
<linearGradient id="gnavl" x1="0" y1="0" x2="1" y2="1"><stop offset="0" stop-color="#fff"/><stop offset="0.5" stop-color="#f2f7fa"/><stop offset="1" stop-color="#c3dce6"/></linearGradient>
<linearGradient id="gnavr" x1="0" y1="0" x2="0.6" y2="1"><stop offset="0" stop-color="#9c9c9c"/><stop offset="1" stop-color="#7c7c7c"/></linearGradient>
<path d="M12.4,26.6 L27.3,8.9 V19.7 H36.6 V33.1 H27.3 V43.6 Z" fill="url(#gnavl)"/>
<path d="M101.4,26.6 L85.5,9.2 V19.7 H75.2 V33.1 H85.5 V43.6 Z" fill="url(#gnavr)"/>
<linearGradient id="gico" x1="0" y1="0" x2="0" y2="1"><stop offset="0" stop-color="#c9d1f6"/><stop offset="1" stop-color="#8e99d8"/></linearGradient>
<g fill="url(#gico)"><rect x="1463.5" y="13.2" width="10.5" height="9.3"/><rect x="1484" y="13.2" width="13.6" height="9.3"/><rect x="1462" y="27" width="18.5" height="13.8"/><rect x="1485" y="28.2" width="12.6" height="9.3"/></g><g fill="#a9b3e6"><rect x="1468" y="22" width="1.6" height="6"/><rect x="1474" y="17" width="10" height="1.6"/><rect x="1480" y="32.2" width="5" height="1.6"/></g>
<text x="1519.5" y="37.5" font-size="27.5" fill="#a8a8a8" textLength="341.0" lengthAdjust="spacingAndGlyphs">BTS_RangeAttackLocation</text>
<path d="M1874,18.5 L1885,28.5 L1874,38.5" fill="none" stroke="#d0d0d0" stroke-width="3"/>
<text x="1901.5" y="36.0" font-size="27.5" fill="#a8a8a8" textLength="157.0" lengthAdjust="spacingAndGlyphs">Event Graph</text>
<text y="34.2" font-size="30.5" font-weight="bold" fill="#2e2e2e"><tspan x="3297.2" textLength="67.4" lengthAdjust="spacingAndGlyphs">Zoom</tspan> <tspan x="3376.3" textLength="25.5" lengthAdjust="spacingAndGlyphs">-3</tspan></text>
<rect x="0" y="0" width="80" height="947" fill="url(#vigL)"/>
<rect x="3327" y="0" width="80" height="947" fill="url(#vigR)"/>
<rect x="0" y="907" width="3407" height="40" fill="url(#vigB)"/>
</svg></body></html>
